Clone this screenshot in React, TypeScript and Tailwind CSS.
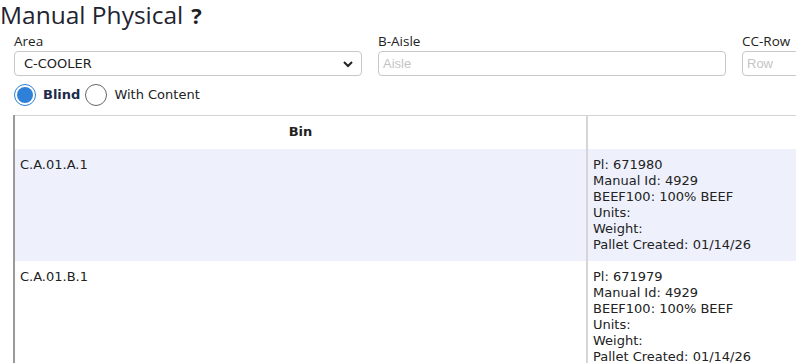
import React, { useState } from 'react';

type Row = {
  bin: string;
  pl: string;
  manualId: string;
  product: string;
  created: string;
};

const rows: Row[] = [
  { bin: 'C.A.01.A.1', pl: '671980', manualId: '4929', product: 'BEEF100: 100% BEEF', created: '01/14/26' },
  { bin: 'C.A.01.B.1', pl: '671979', manualId: '4929', product: 'BEEF100: 100% BEEF', created: '01/14/26' },
];

const body = { fontFamily: '"DejaVu Sans", Verdana, sans-serif' };
const ui = { fontFamily: '"Open Sans", "Noto Sans", sans-serif' };

export default function App() {
  const [mode, setMode] = useState<'blind' | 'content'>('blind');

  return (
    <div className="w-[796px] h-[363px] overflow-hidden bg-white text-[#222]">
      {/* Title */}
      <h1 className="flex items-end h-[30px] text-[24.5px] leading-[30px] text-[#1f2430]" style={ui}>
        <span className="leading-[30px]">Manual Physical</span>
        <span className="ml-[8px] text-[22px] leading-[30px] font-bold text-[#222]">?</span>
      </h1>

      {/* Filters */}
      <div className="flex gap-4 pl-[14px] pt-[3px] w-[1200px]">
        <div className="w-[348px] shrink-0">
          <label className="block text-[13.5px] leading-[17px] text-[#222]" style={ui}>Area</label>
          <div className="relative mt-[1px] h-[25px] rounded-[4px] border border-[#c8c8c8] flex items-center pl-[9px]">
            <span className="text-[13px] text-[#222]" style={body}>C-COOLER</span>
            <svg className="absolute right-[8px] top-[8px]" width="10" height="8" viewBox="0 0 10 8">
              <path d="M1 2 L5 6 L9 2" stroke="#222" strokeWidth="2" fill="none" />
            </svg>
          </div>
        </div>
        <div className="w-[348px] shrink-0">
          <label className="block text-[13.5px] leading-[17px] text-[#222]" style={ui}>B-Aisle</label>
          <input
            placeholder="Aisle"
            className="block w-full mt-[1px] h-[25px] rounded-[4px] border border-[#c8c8c8] px-[4px] text-[13px] placeholder:text-[#c4c4c4] outline-none"
            style={{ fontFamily: '"Liberation Sans", Arial, sans-serif' }}
          />
        </div>
        <div className="w-[348px] shrink-0">
          <label className="block text-[13.5px] leading-[17px] text-[#222]" style={ui}>CC-Row</label>
          <input
            placeholder="Row"
            className="block w-full mt-[1px] h-[25px] rounded-[4px] border border-[#c8c8c8] px-[4px] text-[13px] placeholder:text-[#c4c4c4] outline-none"
            style={{ fontFamily: '"Liberation Sans", Arial, sans-serif' }}
          />
        </div>
      </div>

      {/* Mode */}
      <div className="flex items-center pl-[14px] mt-[8px] h-[22px] text-[13px]" style={body}>
        <button onClick={() => setMode('blind')} className="flex items-center">
          <span className={`w-[22px] h-[22px] rounded-full border flex items-center justify-center ${mode === 'blind' ? 'border-[#2b7fd6]' : 'border-[#666]'}`}>
            {mode === 'blind' && <span className="w-[16px] h-[16px] rounded-full bg-[#2f80d8]" />}
          </span>
          <span className={`ml-[7px] ${mode === 'blind' ? 'font-bold text-[#1c2b4a]' : ''}`}>Blind</span>
        </button>
        <button onClick={() => setMode('content')} className="flex items-center ml-[5px]">
          <span className={`w-[22px] h-[22px] rounded-full border flex items-center justify-center ${mode === 'content' ? 'border-[#2b7fd6]' : 'border-[#666]'}`}>
            {mode === 'content' && <span className="w-[16px] h-[16px] rounded-full bg-[#2f80d8]" />}
          </span>
          <span className={`ml-[7px] ${mode === 'content' ? 'font-bold text-[#1c2b4a]' : ''}`}>With Content</span>
        </button>
      </div>

      {/* Table */}
      <div className="ml-[13px] mt-[9px] w-[1100px]">
        <table className="border-collapse text-[13px] leading-[16px]" style={body}>
          <thead>
            <tr className="h-[33px] border-t border-[#d4d4d4]">
              <th className="w-[573px] border-l-2 border-l-[#9a9a9a] border-r-2 border-r-[#d6d6d6] font-bold text-center">Bin</th>
              <th className="w-[520px]"></th>
            </tr>
          </thead>
          <tbody>
            {rows.map((r, i) => (
              <tr key={r.bin} className={i % 2 === 0 ? 'bg-[#eef1fc]' : 'bg-white'}>
                <td className="align-top border-l-2 border-l-[#9a9a9a] border-r-2 border-r-[#d6d6d6] pl-[5px] pt-[8px]">{r.bin}</td>
                <td className="align-top pl-[5px] pt-[8px] pb-[8px]">
                  <div>Pl: {r.pl}</div>
                  <div>Manual Id: {r.manualId}</div>
                  <div>{r.product}</div>
                  <div>Units:</div>
                  <div>Weight:</div>
                  <div>Pallet Created: {r.created}</div>
                </td>
              </tr>
            ))}
          </tbody>
        </table>
      </div>
    </div>
  );
}
